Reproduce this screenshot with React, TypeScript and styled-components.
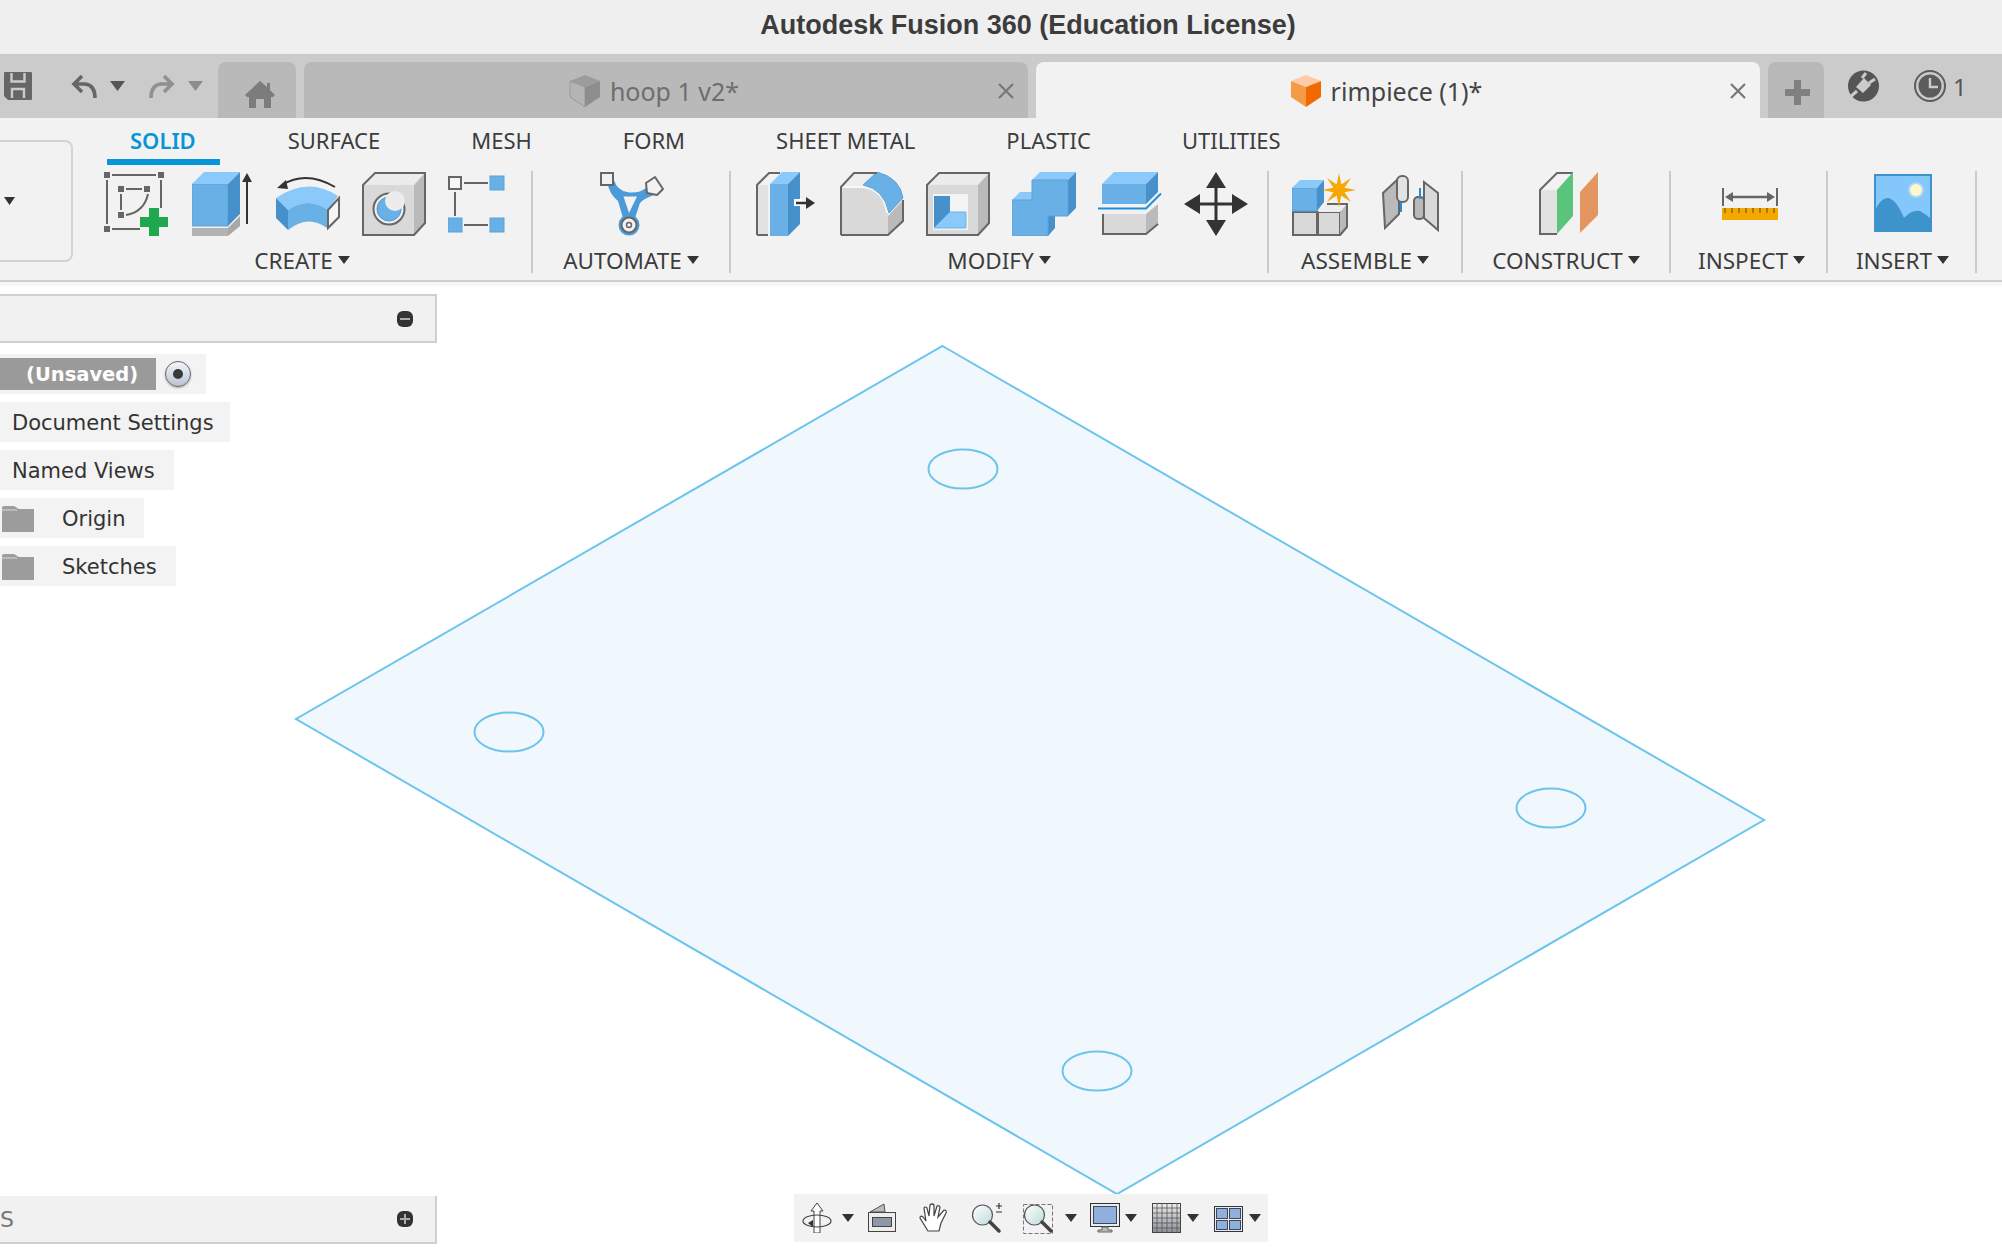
import React from 'react';
import styled, { createGlobalStyle } from 'styled-components';

const BLUE = '#68b0e6';
const BLUE_TOP = '#8ac9fa';
const BLUE_SIDE = '#4691cc';
const GREY = '#666666';
const FACE = '#d9d9d9';
const SIDE = '#bababa';

const GlobalStyle = createGlobalStyle`
  html, body {
    margin: 0;
    padding: 0;
    background: #fff;
  }
  * {
    box-sizing: border-box;
  }
`;

const Page = styled.div`
  width: 2002px;
  height: 1252px;
  display: flex;
  flex-direction: column;
  overflow: hidden;
  font-family: "Noto Sans", "Open Sans", sans-serif;
`;

const TitleBar = styled.div`
  height: 54px;
  flex: none;
  display: flex;
  align-items: center;
  justify-content: center;
  padding-left: 54px;
  padding-bottom: 4px;
  background: #f0eff0;
  color: #3c3c3c;
  font-family: "Liberation Sans", Arial, sans-serif;
  font-size: 27px;
  font-weight: 700;
`;

const TabBar = styled.div`
  height: 64px;
  flex: none;
  display: flex;
  align-items: flex-end;
  background: #cbcbcb;
`;

const ToolSlot = styled.div<{ $ml: number }>`
  align-self: center;
  display: flex;
  align-items: center;
  margin-left: ${p => p.$ml}px;
  color: #555;
  font-size: 24px;
`;

const Tab = styled.div<{ $active?: boolean; $width: number; $ml: number }>`
  position: relative;
  width: ${p => p.$width}px;
  height: 56px;
  margin-left: ${p => p.$ml}px;
  display: flex;
  align-items: center;
  justify-content: center;
  gap: 9px;
  border-radius: 8px 8px 0 0;
  background: ${p => (p.$active ? '#f2f2f2' : '#b9b9b9')};
  color: ${p => (p.$active ? '#444' : '#6e6e6e')};
  font-size: 25px;
`;

const TabLabel = styled.div`
  display: flex;
  align-items: center;
  gap: 9px;
  padding-right: 24px;
  padding-top: 2px;
`;

const HomeGlyph = styled.svg`
  margin: 10px 0 0 5px;
`;

const PlusGlyph = styled.svg`
  margin: 4px 0 0 2px;
`;

const CloseIcon = styled.svg`
  position: absolute;
  right: 13px;
  top: 20px;
`;

const Ribbon = styled.div`
  height: 164px;
  flex: none;
  display: flex;
  background: #f2f2f2;
  border-bottom: 2px solid #cfcfcf;
`;

const DesignBox = styled.div`
  width: 73px;
  height: 122px;
  flex: none;
  margin-top: 22px;
  display: flex;
  align-items: center;
  padding-left: 4px;
  border: 2px solid #d4d4d4;
  border-left: none;
  border-radius: 0 8px 8px 0;
`;

const RibbonBody = styled.div`
  display: flex;
  flex-direction: column;
`;

const RibbonTabs = styled.div`
  height: 47px;
  display: flex;
  gap: 45px;
  margin-left: 34px;
`;

const RibbonTab = styled.div<{ $active?: boolean }>`
  height: 47px;
  padding: 8px ${p => (p.$active ? 24 : 23)}px 0 23px;
  color: ${p => (p.$active ? '#0696d7' : '#3c3c3c')};
  font-size: 22px;
  line-height: 28px;
  font-weight: ${p => (p.$active ? 600 : 400)};
  border-bottom: 6px solid ${p => (p.$active ? '#0696d7' : 'transparent')};
`;

const Groups = styled.div`
  display: flex;
  margin-top: 6px;
`;

const Group = styled.div<{ $width: number }>`
  width: ${p => p.$width}px;
  height: 102px;
  flex: none;
  display: flex;
  flex-direction: column;
  border-right: 2px solid #cbcbcb;
`;

const IconRow = styled.div<{ $pad: number; $gap?: number }>`
  height: 64px;
  margin-top: 1px;
  display: flex;
  padding-left: ${p => p.$pad}px;
  gap: ${p => p.$gap ?? 22}px;
`;

const GroupLabel = styled.div<{ $shift?: number }>`
  margin-top: 12px;
  height: 24px;
  display: flex;
  align-items: center;
  justify-content: center;
  gap: 5px;
  padding-left: ${p => p.$shift ?? 0}px;
  color: #3c3c3c;
  font-size: 22.500px;
`;

const Strip = styled.div`
  height: 4px;
  flex: none;
  background: #f6f6f6;
`;

const Canvas = styled.div`
  position: relative;
  flex: 1;
  background: #fff;
`;

const PlateSvg = styled.svg`
  position: absolute;
  left: 0;
  top: 0;
`;

const BrowserPanel = styled.div`
  position: absolute;
  left: 0;
  top: 8px;
  display: flex;
  flex-direction: column;
  align-items: flex-start;
  gap: 8px;
  font-family: "DejaVu Sans", Verdana, sans-serif;
  font-size: 21px;
  color: #333;
`;

const PanelHeader = styled.div`
  width: 437px;
  height: 49px;
  margin-bottom: 3px;
  display: flex;
  align-items: center;
  justify-content: flex-end;
  padding-right: 22px;
  background: #f1f1f1;
  border: 2px solid #cfcfcf;
  border-left: none;
`;

const PanelRow = styled.div<{ $width: number }>`
  width: ${p => p.$width}px;
  height: 40px;
  display: flex;
  align-items: center;
  padding: 1px 0 0 12px;
  background: #f3f3f3;
`;

const FolderRow = styled(PanelRow)`
  padding-left: 2px;
  gap: 28px;
`;

const UnsavedRow = styled(PanelRow)`
  padding: 0;
  gap: 9px;
`;

const UnsavedPill = styled.div`
  width: 156px;
  height: 32px;
  display: flex;
  align-items: center;
  padding-left: 26px;
  background: #9a9a9a;
  color: #fff;
  font-size: 19.500px;
  font-weight: 700;
`;

const Radio = styled.div`
  width: 26px;
  height: 26px;
  display: flex;
  align-items: center;
  justify-content: center;
  border-radius: 50%;
  border: 1.5px solid #666;
  background: linear-gradient(#f4f6fa, #b9c2d4);
  box-shadow: 0 1px 2px rgba(0, 0, 0, 0.3);
`;

const RadioDot = styled.div`
  width: 10px;
  height: 10px;
  border-radius: 50%;
  background: #3a3a3a;
`;

const FooterPanel = styled(PanelHeader)`
  position: absolute;
  left: 0;
  bottom: 8px;
  height: 48px;
  margin: 0;
  justify-content: space-between;
  border-top: none;
  font-family: "DejaVu Sans", Verdana, sans-serif;
  font-size: 22px;
  color: #777;
`;

const SquareButton = styled.svg`
  flex: none;
`;

const NavBar = styled.div`
  position: absolute;
  left: 794px;
  bottom: 10px;
  width: 474px;
  height: 48px;
  display: flex;
  align-items: center;
  background: #f2f2f2;
`;

const NavSlot = styled.div<{ $ml: number }>`
  display: flex;
  margin-left: ${p => p.$ml}px;
`;

const Caret: React.FC<{ w?: number; h?: number; color?: string }> = ({ w = 9, h = 6, color = '#333' }) => (
  <svg width={w} height={h} viewBox="0 0 12 8" preserveAspectRatio="none">
    <polygon points="0,0 12,0 6,8" fill={color} />
  </svg>
);

// 64px ribbon icons
const Icon: React.FC<{ w?: number; children: React.ReactNode }> = ({ w = 64, children }) => (
  <svg width={w} height={64} viewBox={`0 0 ${w} 64`}>
    {children}
  </svg>
);

const Handle: React.FC<{ x: number; y: number }> = ({ x, y }) => <rect x={x} y={y} width={6} height={6} fill={GREY} />;

const SketchIcon = () => (
  <Icon w={66}>
    <Handle x={0} y={0} />
    <Handle x={54} y={0} />
    <Handle x={0} y={54} />
    <Handle x={14} y={14} />
    <Handle x={40} y={14} />
    <Handle x={14} y={40} />
    <g stroke={GREY} strokeWidth={2} fill="none">
      <path d="M8 3H52M3 8V52M57 8V36M8 57H36M22 17H38M17 22V38M22 43Q40 40 44 22" />
    </g>
    <path d="M45 36H55V45H64V55H55V64H45V55H36V45H45Z" fill="#1fa84f" />
  </Icon>
);

const ExtrudeIcon = () => (
  <Icon w={62}>
    <rect x={0} y={12} width={36} height={42} fill={BLUE} stroke="#5aa3d8" />
    <polygon points="0,12 12,0 48,0 36,12" fill={BLUE_TOP} />
    <polygon points="36,12 48,0 48,42 36,54" fill={BLUE_SIDE} />
    <rect x={0} y={56} width={36} height={8} fill="#b3b3b3" />
    <polygon points="36,64 48,54 48,44 36,56" fill="#a8a8a8" />
    <path d="M55 52V10" stroke="#333" strokeWidth={2} />
    <polygon points="50,10 60,10 55,1" fill="#333" />
  </Icon>
);

const RevolveIcon = () => (
  <Icon>
    <path d="M59 15Q30 -2 6 13" stroke="#333" strokeWidth={2} fill="none" />
    <polygon points="1,16 10,8 12,17" fill="#333" />
    <path d="M0 26Q32 4 62 24L52 38Q32 24 12 38Z" fill={BLUE_TOP} />
    <path d="M12 38Q32 24 52 38L51 56Q32 42 12 58Z" fill={BLUE} />
    <path d="M0 26L12 38V58L0 46Z" fill={BLUE_SIDE} />
    <polygon points="52,38 63,26 63,45 52,56" fill="#f6f6f6" stroke={GREY} strokeWidth={2} />
  </Icon>
);

const Cube: React.FC = () => (
  <>
    <polygon points="1,13 13,1 63,1 52,13" fill="#ececec" />
    <rect x={1} y={13} width={51} height={50} fill={FACE} />
    <polygon points="52,13 63,1 63,51 52,63" fill={SIDE} />
    <polygon points="1,13 13,1 63,1 63,51 52,63 1,63" fill="none" stroke={GREY} strokeWidth={2} />
  </>
);

const HoleIcon = () => (
  <Icon>
    <Cube />
    <circle cx={27} cy={37} r={15.500} fill="#eee" stroke={GREY} strokeWidth={2} />
    <circle cx={27} cy={37} r={12} fill={BLUE} stroke="#4f9ad2" />
    <circle cx={33} cy={29} r={10} fill="#ececec" />
  </Icon>
);

const PatternIcon = () => (
  <Icon w={58}>
    <rect x={1} y={5} width={12} height={12} fill="#f6f6f6" stroke={GREY} strokeWidth={2} />
    <rect x={42} y={4} width={14} height={14} fill={BLUE} stroke="#5aa3d8" />
    <rect x={0} y={46} width={14} height={14} fill={BLUE} stroke="#5aa3d8" />
    <rect x={42} y={46} width={14} height={14} fill={BLUE} stroke="#5aa3d8" />
    <path d="M16 11H40M7 20V44M16 53H40" stroke={GREY} strokeWidth={2} />
  </Icon>
);

const AutomateIcon = () => (
  <Icon>
    <path d="M7 9L14 8Q17 18 27 20Q38 22 46 16L54 23Q43 27 40 31L35 46H23L18 29Q9 22 7 9Z" fill="#4a9bd8" />
    <polygon points="23.500,24.500 37,24.500 29,41" fill="#f2f2f2" />
    <circle cx={29} cy={53} r={10.500} fill="#4a9bd8" />
    <circle cx={29} cy={53} r={7.500} fill="#f2f2f2" stroke={GREY} strokeWidth={2} />
    <circle cx={29} cy={53} r={2.500} fill="none" stroke={GREY} strokeWidth={1.500} />
    <rect x={1} y={1} width={12} height={12} fill="#f2f2f2" stroke={GREY} strokeWidth={2} />
    <polygon points="46,11 55,5 63,17 57,23 47,21" fill="#f2f2f2" stroke={GREY} strokeWidth={2} strokeLinejoin="round" />
  </Icon>
);

const PressPullIcon = () => (
  <Icon w={62}>
    <path d="M1 63V13L13 1H24" stroke={GREY} strokeWidth={2} fill="none" />
    <path d="M2 13H12V63H2Z" fill="#e2e2e2" />
    <path d="M1 63H12" stroke={GREY} strokeWidth={2} />
    <rect x={14} y={12} width={18} height={52} fill={BLUE} />
    <polygon points="14,12 26,0 44,0 32,12" fill={BLUE_TOP} />
    <polygon points="32,12 44,0 44,52 32,64" fill={BLUE_SIDE} />
    <rect x={38} y={27} width={8} height={7} fill="#fff" />
    <path d="M40 31H52" stroke="#333" strokeWidth={2.500} />
    <polygon points="50,25 59,31 50,37" fill="#333" />
  </Icon>
);

const FilletIcon = () => (
  <Icon>
    <polygon points="1,15 14,1 37,1 23,14" fill="#eee" />
    <path d="M48 44L63 28V50L48 63Z" fill={SIDE} />
    <path d="M1 15H22Q46 18 48 44V63H1Z" fill={FACE} />
    <path d="M1 15H22Q44 17 47 41" stroke="#f8f8f8" strokeWidth={2} fill="none" />
    <path d="M23 13L37 0Q60 6 63 26L49 41Q44 17 23 13Z" fill={BLUE} stroke="#5aa3d8" />
    <path d="M1 63V15L14 1H37M1 63H48L63 49V28" stroke={GREY} strokeWidth={2} fill="none" />
  </Icon>
);

const ShellIcon = () => (
  <Icon>
    <Cube />
    <rect x={7} y={22} width={35} height={36} fill="#f4f4f4" />
    <polygon points="8,24 24,24 24,40 8,56" fill={BLUE_SIDE} />
    <polygon points="24,40 40,40 40,56 8,56" fill={BLUE_TOP} stroke="#6fb3e6" />
  </Icon>
);

const CombineIcon = () => (
  <Icon>
    <polygon points="20,8 28,0 64,0 56,8" fill={BLUE_TOP} />
    <polygon points="56,8 64,0 64,36 56,44" fill={BLUE_SIDE} />
    <polygon points="0,28 8,20 20,20 20,28" fill={BLUE_TOP} />
    <polygon points="36,44 43,44 43,56 36,64" fill={BLUE_SIDE} />
    <polygon points="20,8 56,8 56,44 36,44 36,64 0,64 0,28 20,28" fill={BLUE} stroke="#5aa3d8" />
  </Icon>
);

const SplitIcon = () => (
  <Icon>
    <rect x={4} y={12} width={44} height={20} fill={BLUE} />
    <polygon points="4,12 16,0 60,0 48,12" fill={BLUE_TOP} />
    <polygon points="48,12 60,0 60,20 48,32" fill={BLUE_SIDE} />
    <rect x={5} y={42} width={43} height={20} fill={FACE} />
    <polygon points="48,42 60,32 60,52 48,62" fill={SIDE} />
    <path d="M5 42V62H48L60 52" stroke={GREY} strokeWidth={2} fill="none" />
    <path d="M0 36.500H48L63 21.500" stroke="#1d8ee0" strokeWidth={2} fill="none" />
  </Icon>
);

const MoveIcon = () => (
  <Icon>
    <path d="M32 12V52M12 32H52" stroke="#333" strokeWidth={3} />
    <polygon points="32,0 42,16 22,16" fill="#333" />
    <polygon points="32,64 42,48 22,48" fill="#333" />
    <polygon points="0,32 16,22 16,42" fill="#333" />
    <polygon points="64,32 48,22 48,42" fill="#333" />
  </Icon>
);

const starPoints = (cx: number, cy: number, big: number, small: number, n: number) => {
  const pts: string[] = [];
  for (let i = 0; i < n * 2; i++) {
    const r = i % 2 ? small : big;
    const a = (Math.PI * i) / n - Math.PI / 2;
    pts.push(`${(cx + r * Math.cos(a)).toFixed(1)},${(cy + r * Math.sin(a)).toFixed(1)}`);
  }
  return pts.join(' ');
};

const JointIcon = () => (
  <Icon w={64}>
    <rect x={1} y={40} width={24} height={23} fill={FACE} stroke={GREY} strokeWidth={2} />
    <rect x={26} y={40} width={22} height={23} fill={FACE} stroke={GREY} strokeWidth={2} />
    <polygon points="26,40 35,32 55,32 48,40" fill="#eee" />
    <polygon points="48,40 55,32 55,55 48,63" fill={SIDE} />
    <path d="M35 32H55V55L48 63" stroke={GREY} strokeWidth={2} fill="none" />
    <rect x={0} y={16} width={25} height={23} fill={BLUE} stroke="#5aa3d8" />
    <polygon points="0,16 8,8 32,8 25,16" fill={BLUE_TOP} />
    <polygon points="25,16 32,8 32,30 25,39" fill={BLUE_SIDE} />
    <polygon points={starPoints(47, 18, 17, 6, 8)} fill="#f5a800" />
  </Icon>
);

const AsBuiltIcon = () => (
  <Icon w={58}>
    <polygon points="1,21 17,6 17,42 3,56" fill={SIDE} stroke={GREY} strokeWidth={2} />
    <rect x={15} y={4} width={11} height={26} rx={5} fill="#e2e2e2" stroke={GREY} strokeWidth={2} />
    <polygon points="42,10 56,21 56,58 42,46" fill={FACE} stroke={GREY} strokeWidth={2} />
    <rect x={32} y={25} width={10} height={22} rx={4} fill={SIDE} stroke={GREY} strokeWidth={2} />
    <path d="M19 30V40M38 16V27" stroke="#1d8ee0" strokeWidth={2} />
  </Icon>
);

const ConstructIcon = () => (
  <Icon w={60}>
    <rect x={1} y={18} width={17} height={44} fill="#e2e2e2" />
    <path d="M18 62H1V18L18 1H34" stroke={GREY} strokeWidth={2} fill="none" />
    <polygon points="18,18 34,0 34,44 18,62" fill="#5ac47a" />
    <polygon points="41,20 59,0 59,43 41,61" fill="#e49660" />
  </Icon>
);

const InspectIcon = () => (
  <Icon w={56}>
    <path d="M1 16V34M55 16V34" stroke={GREY} strokeWidth={2} />
    <path d="M8 25H48" stroke={GREY} strokeWidth={2.500} />
    <polygon points="3,25 11,20 11,30" fill={GREY} />
    <polygon points="53,25 45,20 45,30" fill={GREY} />
    <rect x={0} y={36} width={56} height={12} fill="#f5a800" />
    <path d="M3 36V41M10 36V41M17 36V41M24 36V41M31 36V41M38 36V41M45 36V41M52 36V41" stroke="#8a6a10" strokeWidth={1.500} />
  </Icon>
);

const InsertIcon = () => (
  <Icon w={58}>
    <rect x={1} y={3} width={56} height={56} fill="#84c7fb" stroke="#3f93cc" strokeWidth={2} />
    <circle cx={42} cy={18} r={8} fill="#a7d8fb" />
    <circle cx={42} cy={18} r={6} fill="#fff9c9" />
    <path d="M0 41Q6 26 14 26Q22 27 30 46Q38 37 46 39Q52 42 58 48V60H0Z" fill="#3f93cc" />
  </Icon>
);

const PlateCube: React.FC<{ top: string; left: string; right: string; stroke?: string }> = ({ top, left, right, stroke }) => (
  <svg width={32} height={32} viewBox="0 0 32 32">
    <polygon points="16,0 31,6 16,12 1,6" fill={top} />
    <polygon points="1,6 16,12 16,32 1,22" fill={left} stroke={stroke} />
    <polygon points="31,6 16,12 16,32 31,22" fill={right} />
  </svg>
);

const Folder = () => (
  <svg width={32} height={26} viewBox="0 0 32 26">
    <path d="M0 2Q0 0 2 0H12L17 3H32V26H0Z" fill="#9c9c9c" />
    <path d="M0 4H15" stroke="#d8d8d8" strokeWidth={1} />
  </svg>
);

const Close = () => (
  <CloseIcon width={18} height={18} viewBox="0 0 18 18">
    <path d="M2 2L16 16M16 2L2 16" stroke="#777" strokeWidth={2.200} />
  </CloseIcon>
);

const PanelToggle: React.FC<{ plus?: boolean }> = ({ plus }) => (
  <SquareButton width={16} height={16} viewBox="0 0 16 16">
    <rect width={16} height={16} rx={6} fill="#333" />
    <path d={plus ? 'M3 8H13M8 3V13' : 'M3 8H13'} stroke="#aaa" strokeWidth={2} />
  </SquareButton>
);

const GlassIcon: React.FC<{ frame?: boolean; plus?: boolean }> = ({ frame, plus }) => (
  <svg width={31} height={31} viewBox="0 0 31 31">
    {frame && <rect x={0.500} y={1.500} width={29} height={29} fill="none" stroke="#777" strokeDasharray="4 2" />}
    <defs>
      <linearGradient id="glass" x1="0" y1="0" x2="1" y2="1">
        <stop offset="0" stopColor="#ffffff" />
        <stop offset="1" stopColor="#bcdcd8" />
      </linearGradient>
    </defs>
    <circle cx={11.500} cy={12} r={10} fill="url(#glass)" stroke="#555" strokeWidth={1.200} />
    <path d="M19 19L28 28" stroke="#444" strokeWidth={3.500} strokeLinecap="round" />
    {plus && <path d="M25 3H31M28 0V6M25 9H31" stroke="#333" strokeWidth={1.200} />}
  </svg>
);

const plate = {
  points: '942.500,60 1764,534 1117,908 296,433',
  holes: [
    [963, 183],
    [509, 446],
    [1551, 522],
    [1097, 785],
  ],
};

const App: React.FC = () => {
  const ribbonTabs = ['SOLID', 'SURFACE', 'MESH', 'FORM', 'SHEET METAL', 'PLASTIC', 'UTILITIES'];

  return (
    <Page>
      <GlobalStyle />
      <TitleBar>Autodesk Fusion 360 (Education License)</TitleBar>

      <TabBar>
        <ToolSlot $ml={4}>
          <svg width={28} height={28} viewBox="0 0 28 28">
            <path d="M1 0H27Q28 0 28 1V27Q28 28 27 28H4L0 24V1Q0 0 1 0Z" fill="#666" />
            <path d="M7.500 1V9.500H20.500V1M8 26V17H20V26" stroke="#cbcbcb" strokeWidth={2.400} fill="none" />
          </svg>
        </ToolSlot>
        <ToolSlot $ml={39}>
          <svg width={26} height={24} viewBox="0 0 26 24">
            <path d="M11 2L3 10L11 18M3 10H14Q24 11 24 24" stroke="#666" strokeWidth={3.600} fill="none" />
          </svg>
        </ToolSlot>
        <ToolSlot $ml={13}>
          <Caret w={15} h={10} color="#555" />
        </ToolSlot>
        <ToolSlot $ml={24}>
          <svg width={26} height={24} viewBox="0 0 26 24">
            <path d="M15 2L23 10L15 18M23 10H12Q2 11 2 24" stroke="#909090" strokeWidth={3.600} fill="none" />
          </svg>
        </ToolSlot>
        <ToolSlot $ml={13}>
          <Caret w={15} h={10} color="#8c8c8c" />
        </ToolSlot>

        <Tab $width={78} $ml={15}>
          <HomeGlyph width={30} height={28} viewBox="0 0 30 28">
            <path d="M15 0L22 6V2H25V9L30 14L28 16H26V27H19V18H11V27H4V16H2L0 14Z" fill="#7c7c7c" />
          </HomeGlyph>
        </Tab>

        <Tab $width={724} $ml={8}>
          <TabLabel>
            <PlateCube top="#9c9c9c" left="#b4b4b4" right="#8e8e8e" stroke="#9a9a9a" />
            hoop 1 v2*
          </TabLabel>
          <Close />
        </Tab>

        <Tab $active $width={724} $ml={8}>
          <TabLabel>
            <PlateCube top="#ffcba6" left="#f59a45" right="#f06a00" />
            rimpiece (1)*
          </TabLabel>
          <Close />
        </Tab>

        <Tab $width={56} $ml={8}>
          <PlusGlyph width={25} height={25} viewBox="0 0 25 25">
            <path d="M9 0H16V9H25V16H16V25H9V16H0V9H9Z" fill="#808080" />
          </PlusGlyph>
        </Tab>

        <ToolSlot $ml={24}>
          <svg width={31} height={32} viewBox="0 0 31 32">
            <circle cx={15.500} cy={16} r={15.500} fill="#555" />
            <path d="M1 28L9 21" stroke="#cbcbcb" strokeWidth={3} />
            <path d="M8 17L16 8L23 15L15 23Z" fill="#cbcbcb" />
            <path d="M14 8L18 3M21 13L27 9" stroke="#cbcbcb" strokeWidth={3} />
          </svg>
        </ToolSlot>
        <ToolSlot $ml={35}>
          <svg width={32} height={32} viewBox="0 0 32 32">
            <circle cx={16} cy={16} r={15} fill="none" stroke="#5c5c5c" strokeWidth={2} />
            <circle cx={16} cy={16} r={11.500} fill="#5c5c5c" />
            <path d="M16 8V17H24" stroke="#cbcbcb" strokeWidth={2.400} fill="none" />
          </svg>
        </ToolSlot>
        <ToolSlot $ml={7}>1</ToolSlot>
      </TabBar>

      <Ribbon>
        <DesignBox>
          <Caret w={11} h={8} color="#333" />
        </DesignBox>
        <RibbonBody>
          <RibbonTabs>
            {ribbonTabs.map(t => (
              <RibbonTab key={t} $active={t === 'SOLID'}>
                {t}
              </RibbonTab>
            ))}
          </RibbonTabs>
          <Groups>
            <Group $width={460}>
              <IconRow $pad={31}>
                <SketchIcon />
                <ExtrudeIcon />
                <RevolveIcon />
                <HoleIcon />
                <PatternIcon />
              </IconRow>
              <GroupLabel>
                CREATE <Caret w={12} h={8} />
              </GroupLabel>
            </Group>
            <Group $width={198}>
              <IconRow $pad={67}>
                <AutomateIcon />
              </IconRow>
              <GroupLabel>
                AUTOMATE <Caret w={12} h={8} />
              </GroupLabel>
            </Group>
            <Group $width={538}>
              <IconRow $pad={25}>
                <PressPullIcon />
                <FilletIcon />
                <ShellIcon />
                <CombineIcon />
                <SplitIcon />
                <MoveIcon />
              </IconRow>
              <GroupLabel>
                MODIFY <Caret w={12} h={8} />
              </GroupLabel>
            </Group>
            <Group $width={194}>
              <IconRow $pad={23} $gap={26}>
                <JointIcon />
                <AsBuiltIcon />
              </IconRow>
              <GroupLabel>
                ASSEMBLE <Caret w={12} h={8} />
              </GroupLabel>
            </Group>
            <Group $width={208}>
              <IconRow $pad={76}>
                <ConstructIcon />
              </IconRow>
              <GroupLabel>
                CONSTRUCT <Caret w={12} h={8} />
              </GroupLabel>
            </Group>
            <Group $width={157}>
              <IconRow $pad={51}>
                <InspectIcon />
              </IconRow>
              <GroupLabel $shift={6}>
                INSPECT <Caret w={12} h={8} />
              </GroupLabel>
            </Group>
            <Group $width={149}>
              <IconRow $pad={46}>
                <InsertIcon />
              </IconRow>
              <GroupLabel $shift={2}>
                INSERT <Caret w={12} h={8} />
              </GroupLabel>
            </Group>
          </Groups>
        </RibbonBody>
      </Ribbon>
      <Strip />

      <Canvas>
        <PlateSvg width={2002} height={966} viewBox="0 0 2002 966">
          <polygon points={plate.points} fill="#f0f8fe" stroke="#6cc4ec" strokeWidth={2} />
          {plate.holes.map(([cx, cy]) => (
            <ellipse key={cx} cx={cx} cy={cy} rx={34.500} ry={19.500} fill="none" stroke="#6cc4ec" strokeWidth={2} />
          ))}
        </PlateSvg>

        <BrowserPanel>
          <PanelHeader>
            <PanelToggle />
          </PanelHeader>
          <UnsavedRow $width={206}>
            <UnsavedPill>(Unsaved)</UnsavedPill>
            <Radio>
              <RadioDot />
            </Radio>
          </UnsavedRow>
          <PanelRow $width={230}>Document Settings</PanelRow>
          <PanelRow $width={174}>Named Views</PanelRow>
          <FolderRow $width={144}>
            <Folder />
            Origin
          </FolderRow>
          <FolderRow $width={176}>
            <Folder />
            Sketches
          </FolderRow>
        </BrowserPanel>

        <FooterPanel>
          S
          <PanelToggle plus />
        </FooterPanel>

        <NavBar>
          <NavSlot $ml={8}>
            <svg width={30} height={30} viewBox="0 0 30 30">
              <path d="M15 0L21 8H18V30H12V8H9Z" fill="#fff" stroke="#444" />
              <ellipse cx={15} cy={18} rx={14} ry={6} fill="none" stroke="#444" strokeWidth={1.200} />
              <polygon points="6,20 11,17 11,24" fill="#333" />
            </svg>
          </NavSlot>
          <NavSlot $ml={10}>
            <Caret w={12} h={8} />
          </NavSlot>
          <NavSlot $ml={14}>
            <svg width={28} height={30} viewBox="0 0 28 30">
              <path d="M2 9L16 1L17 9Z" fill="#bbb" stroke="#555" />
              <rect x={0.500} y={9.500} width={27} height={19} fill="#eee" stroke="#444" />
              <rect x={4.500} y={14.500} width={19} height={9} fill="#8f97a8" stroke="#444" />
            </svg>
          </NavSlot>
          <NavSlot $ml={23}>
            <svg width={29} height={30} viewBox="0 0 29 30">
              <path d="M9 28L1 15Q1 12 4 14L7 18L5 5Q6 3 8 5L10 13L11 2Q13 0 15 2L15 13L18 3Q20 2 21 4L19 14L25 7Q28 7 27 10L22 20L20 28Z" fill="#fff" stroke="#444" strokeWidth={1.200} />
            </svg>
          </NavSlot>
          <NavSlot $ml={23}>
            <GlassIcon plus />
          </NavSlot>
          <NavSlot $ml={21}>
            <GlassIcon frame />
          </NavSlot>
          <NavSlot $ml={11}>
            <Caret w={12} h={8} />
          </NavSlot>
          <NavSlot $ml={13}>
            <svg width={30} height={30} viewBox="0 0 30 30">
              <rect x={0.500} y={0.500} width={29} height={23} fill="#e8ecf2" stroke="#333" />
              <rect x={3.500} y={3.500} width={23} height={17} fill="#8fb0dc" stroke="#445" />
              <path d="M12 24V27H8V29H22V27H18V24Z" fill="#bbb" stroke="#666" />
            </svg>
          </NavSlot>
          <NavSlot $ml={5}>
            <Caret w={12} h={8} />
          </NavSlot>
          <NavSlot $ml={15}>
            <svg width={29} height={30} viewBox="0 0 29 30">
              <defs>
                <linearGradient id="gridFill" x1="0" y1="0" x2="0" y2="1">
                  <stop offset="0" stopColor="#eeeeee" />
                  <stop offset="1" stopColor="#8b8f99" />
                </linearGradient>
              </defs>
              <rect x={0.500} y={0.500} width={28} height={29} fill="url(#gridFill)" stroke="#444" />
              <path d="M5 0V30M10 0V30M15 0V30M20 0V30M25 0V30M0 5H29M0 10H29M0 15H29M0 20H29M0 25H29" stroke="#555" strokeWidth={0.800} />
            </svg>
          </NavSlot>
          <NavSlot $ml={6}>
            <Caret w={12} h={8} />
          </NavSlot>
          <NavSlot $ml={15}>
            <svg width={29} height={30} viewBox="0 0 29 30">
              <rect x={0.500} y={3.500} width={28} height={25} fill="#e8ecf2" stroke="#334" />
              <rect x={2.500} y={5.500} width={11} height={10} fill="#8fb0dc" stroke="#445" />
              <rect x={15.500} y={5.500} width={11} height={10} fill="#8fb0dc" stroke="#445" />
              <rect x={2.500} y={17.500} width={11} height={9} fill="#8fb0dc" stroke="#445" />
              <rect x={15.500} y={17.500} width={11} height={9} fill="#8fb0dc" stroke="#445" />
            </svg>
          </NavSlot>
          <NavSlot $ml={6}>
            <Caret w={12} h={8} />
          </NavSlot>
        </NavBar>
      </Canvas>
    </Page>
  );
};

export default App;
